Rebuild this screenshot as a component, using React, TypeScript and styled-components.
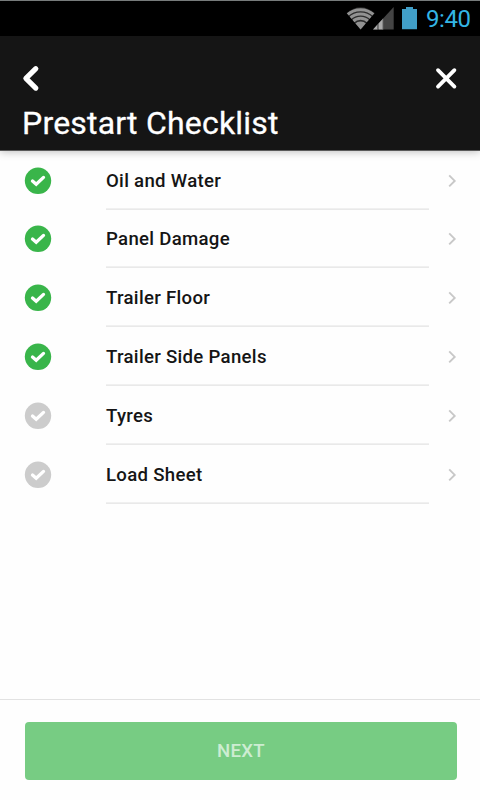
import React from 'react';
import styled, { createGlobalStyle } from 'styled-components';

const GlobalStyle = createGlobalStyle`
  * { box-sizing: border-box; }
  body { margin: 0; background: #fff; font-family: Roboto, 'Liberation Sans', sans-serif; }
  svg { display: block; }
`;

const Screen = styled.div`
  display: flex;
  flex-direction: column;
  width: 480px;
  height: 800px;
  overflow: hidden;
  background: #fefefe;
`;

const StatusBar = styled.div`
  display: flex;
  align-items: flex-start;
  height: 36px;
  padding-right: 9px;
  justify-content: flex-end;
  background: #000;
  border-top: 1px solid #777b7b;
`;

const StatusIcons = styled.svg`
  flex: none;
  margin-right: 8px;
`;

const Clock = styled.span`
  width: 45px;
  padding-top: 4px;
  color: #33b5e5;
  font-size: 24px;
  line-height: 29px;
  letter-spacing: -0.4px;
  white-space: nowrap;
`;

const Header = styled.header`
  flex: none;
  height: 115px;
  padding: 28px 22px 0;
  background: #151515;
  border-bottom: 1px solid #5a5a5a;
  box-shadow: 0 1px 8px rgba(0, 0, 0, 0.25);
`;

const Toolbar = styled.div`
  display: flex;
  justify-content: space-between;
  height: 28px;
`;

const IconButton = styled.button`
  padding: 0;
  border: 0;
  background: none;
`;

const Title = styled.h1`
  margin: 12px 0 0;
  color: #fff;
  font-size: 32px;
  font-weight: 400;
  letter-spacing: 0.2px;
  -webkit-text-stroke: 0.3px #fff;
  line-height: 38px;
  white-space: nowrap;
`;

const List = styled.ul`
  flex: 1;
  margin: 0;
  padding: 0;
  list-style: none;
`;

const Row = styled.li<{ $compact?: boolean }>`
  display: flex;
  align-items: flex-end;
  height: ${(p) => (p.$compact ? 58 : 59)}px;
  padding: 0 22px 0 24px;
`;

const Cell = styled.div`
  display: flex;
  align-items: center;
  height: 58px;
`;

const Label = styled(Cell)`
  width: 323px;
  margin-left: 54px;
  padding-top: 1px;
  border-bottom: 1px solid #e9e9e9;
  box-shadow: 0 -1px 0 #f0f0f0 inset;
  color: #151515;
  font-size: 18.6px;
  font-weight: 500;
  letter-spacing: 0.3px;
`;

const ArrowCell = styled(Cell)`
  margin-left: 17px;
`;

const Footer = styled.footer`
  flex: none;
  height: 101px;
  padding: 22px 23px 0 25px;
  border-top: 1px solid #e2e2e2;
`;

const NextButton = styled.button`
  display: block;
  width: 432px;
  height: 58px;
  padding: 0;
  border: 0;
  border-radius: 4px;
  background: #77cc83;
  color: #cdecd2;
  font-family: inherit;
  font-size: 18.6px;
  font-weight: 500;
  letter-spacing: 0.3px;
`;

const items = [
  { label: 'Oil and Water', done: true },
  { label: 'Panel Damage', done: true },
  { label: 'Trailer Floor', done: true },
  { label: 'Trailer Side Panels', done: true },
  { label: 'Tyres', done: false },
  { label: 'Load Sheet', done: false },
];

function StatusGlyphs() {
  return (
    <StatusIcons width="72" height="34" viewBox="346 1 72 34">
      <clipPath id="fan">
        <path d="M360.6 29.5 346.6 13Q360.6 1.500 374.600 13Z" />
      </clipPath>
      <g clipPath="url(#fan)">
        <rect x="346" y="4" width="30" height="26" fill="#2c2c2c" />
        <g fill="none" stroke="#929292" strokeWidth="3">
          <circle cx="360.600" cy="29.500" r="19.800" />
          <circle cx="360.600" cy="29.500" r="15.500" />
          <circle cx="360.600" cy="29.500" r="11.200" />
        </g>
        <circle cx="360.600" cy="29.500" r="8" fill="#929292" />
      </g>
      <path d="M393.700 7V29.500H373Z" fill="#444" />
      <path d="M373 29.500 377.500 24.600V29.500ZM378.500 23.500 382.900 18.800V29.500H378.500Z" fill="#aaa" />
      <path d="M377.700 24.400V29.500M383 18.700V29.500" stroke="#666" strokeWidth=".8" />
      <path d="M406 7h7v2h4v20.300h-15V9h4z" fill="#419fc8" />
    </StatusIcons>
  );
}

function CheckBadge({ done }: { done: boolean }) {
  return (
    <svg width="28" height="28" viewBox="0 0 28 28">
      <circle cx="14" cy="13.800" r="13.200" fill={done ? '#39b54a' : '#cccccc'} />
      <path d="M8.500 14 12.200 17.300 19.500 10.400" fill="none" stroke="#fff" strokeWidth="3.300" strokeLinecap="round" strokeLinejoin="miter" />
    </svg>
  );
}

export default function App() {
  return (
    <Screen>
      <GlobalStyle />
      <StatusBar>
        <StatusGlyphs />
        <Clock>9:40</Clock>
      </StatusBar>
      <Header>
        <Toolbar>
          <IconButton aria-label="Back">
            <svg width="20" height="28" viewBox="22 64 20 28">
              <path d="M35.800 68.700 25.900 78.400 35.800 88.100" fill="none" stroke="#fff" strokeWidth="5.200" strokeLinecap="round" strokeLinejoin="round" />
            </svg>
          </IconButton>
          <IconButton aria-label="Close">
            <svg width="24" height="28" viewBox="434 64 24 28">
              <path d="M438 70.200 454.400 86.600M454.400 70.200 438 86.600" stroke="#fff" strokeWidth="3.800" strokeLinecap="round" />
            </svg>
          </IconButton>
        </Toolbar>
        <Title>Prestart Checklist</Title>
      </Header>
      <List>
        {items.map((item, i) => (
          <Row key={item.label} $compact={i === 1}>
            <Cell>
              <CheckBadge done={item.done} />
            </Cell>
            <Label>{item.label}</Label>
            <ArrowCell>
              <svg width="12" height="16" viewBox="0 0 12 16">
                <path d="M3.200 2.400 8.700 7.900 3.200 13.400" fill="none" stroke="#c8c8c8" strokeWidth="1.900" />
              </svg>
            </ArrowCell>
          </Row>
        ))}
      </List>
      <Footer>
        <NextButton>NEXT</NextButton>
      </Footer>
    </Screen>
  );
}
